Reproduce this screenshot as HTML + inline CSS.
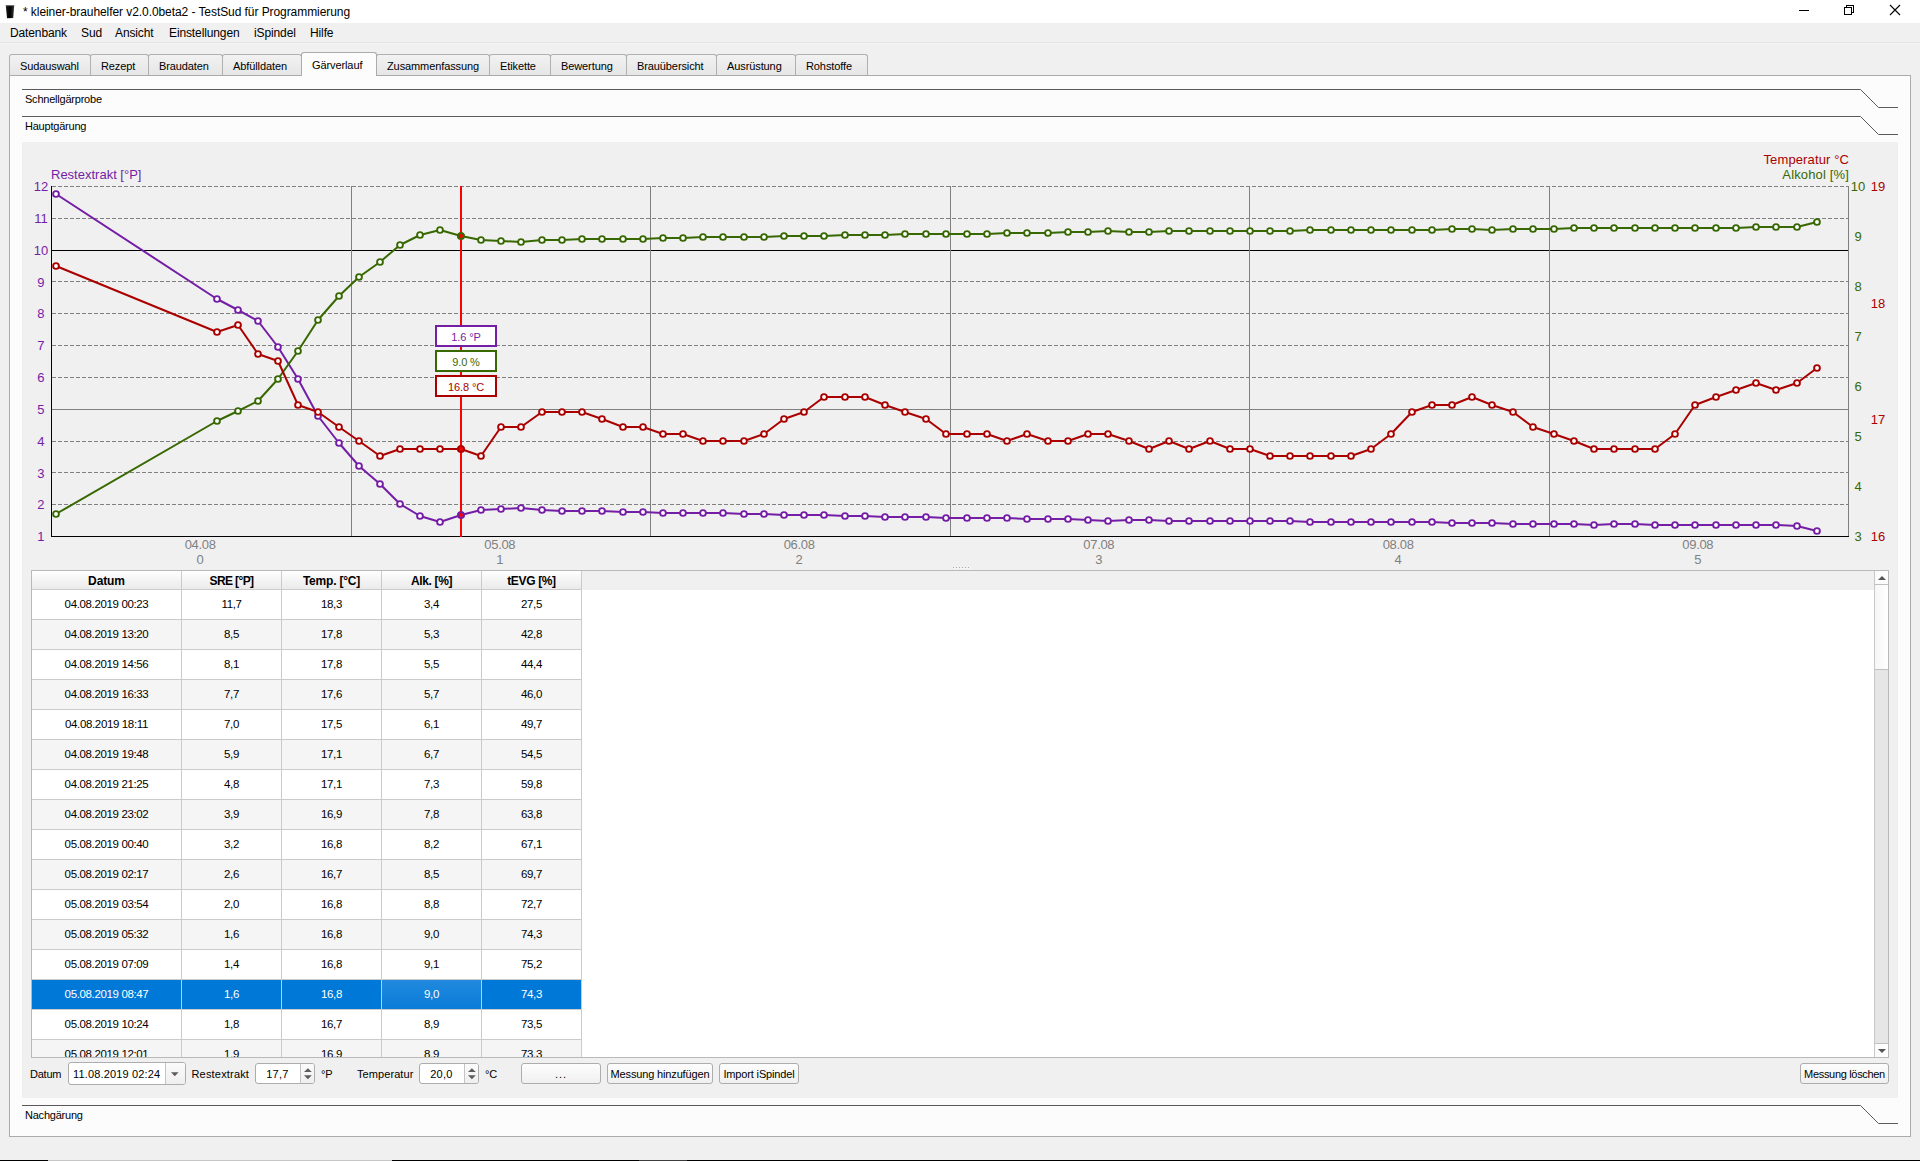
<!DOCTYPE html>
<html lang="de"><head><meta charset="utf-8"><title>kleiner-brauhelfer</title>
<style>
*{box-sizing:border-box;margin:0;padding:0}
html,body{width:1920px;height:1161px;overflow:hidden;background:#f0f0f0;font-family:"Liberation Sans",sans-serif;color:#000}
.abs{position:absolute}
#title{position:absolute;left:0;top:0;width:1920px;height:23px;background:#fff}
#title .txt{position:absolute;left:23px;top:5px;font-size:12px;line-height:15px;letter-spacing:-0.07px;white-space:nowrap}
#menu{position:absolute;left:0;top:23px;width:1920px;height:20px;background:#f0f0f0;border-bottom:1px solid #e2e2e2;font-size:12px;line-height:21px;white-space:nowrap}
#menu span{position:absolute;top:0;letter-spacing:-0.12px}
#menuline{position:absolute;left:0;top:43px;width:1920px;height:1px;background:#f6f6f6}
.tab{position:absolute;top:54px;height:22px;border:1px solid #b0b0b0;border-bottom:none;border-radius:3px 3px 0 0;background:linear-gradient(#f2f2f2,#e5e5e5);font-size:11px;line-height:22px;text-align:left;padding-left:10px;letter-spacing:-0.1px;white-space:nowrap}
.seltab{top:52px;height:24px;background:#fcfcfc;line-height:24px;z-index:3;border-color:#ababab}
#pane{position:absolute;left:9px;top:75px;width:1902px;height:1062px;border:1px solid #ababab;background:#fcfcfc;z-index:1}
#panel{position:absolute;left:22px;top:142px;width:1876px;height:956px;background:#f0f0f0;z-index:2}
.tbx{position:absolute;left:25px;font-size:11px;line-height:14px;letter-spacing:-0.22px;z-index:2}
svg.lines{position:absolute;left:0;top:0;z-index:2}
svg.chart{position:absolute;left:0;top:0;z-index:4}
.tbl{position:absolute;left:31px;top:570px;width:1858px;height:488px;border:1px solid #b9b9b9;background:#fff;overflow:hidden;z-index:4;font-size:11.5px;letter-spacing:-0.36px}
.thead{position:absolute;left:0;top:0;width:1843px;height:19px;background:#f0f0f0}
.th{position:absolute;top:0;height:19px;width:100px;font-weight:bold;font-size:12px;letter-spacing:-0.1px;text-align:center;line-height:20px;border-right:1px solid #cbcbcb;border-bottom:1px solid #cbcbcb;background:linear-gradient(#ffffff,#f2f2f2 60%,#ebebeb)}
.th.c0{width:150px}
.th:nth-child(1){left:0}.th:nth-child(2){left:150px}.th:nth-child(3){left:250px}.th:nth-child(4){left:350px}.th:nth-child(5){left:450px}
.tr{position:relative;height:30px;width:550px;background:#fff}
.tr:nth-child(2){margin-top:19px}
.tr.alt{background:#f5f5f5}
.td{position:absolute;top:0;height:30px;width:100px;text-align:center;line-height:29px;border-right:1px solid #cbcbcb;border-bottom:1px solid #cbcbcb}
.td.c0{width:150px;left:0}
.td:nth-child(2){left:150px}.td:nth-child(3){left:250px}.td:nth-child(4){left:350px}.td:nth-child(5){left:450px}
.tr.sel{background:#0078d7;color:#fff}
.tr.sel .cur{background:linear-gradient(#2189de,#0a7cd8)}
.sb{position:absolute;right:0;top:0;width:14px;height:486px;background:#e6e6e6;border-left:1px solid #c8c8c8}
.sbup,.sbdn{position:absolute;left:0;width:13px;height:14px;background:linear-gradient(90deg,#fafafa,#fff);}
.sbup{top:0;border-bottom:1px solid #c0c0c0}.sbdn{bottom:0;border-top:1px solid #c0c0c0}
.sbup i{position:absolute;left:2.5px;top:4.5px;border:4px solid transparent;border-top:none;border-bottom:4px solid #555;width:0;height:0}
.sbdn i{position:absolute;left:2.5px;top:4.5px;border:4px solid transparent;border-bottom:none;border-top:4px solid #555;width:0;height:0}
.sbh{position:absolute;left:0;top:14px;width:13px;height:85px;background:linear-gradient(90deg,#f6f6f6,#fff);border-bottom:1px solid #c0c0c0}
.lbl{position:absolute;font-size:11px;line-height:14px;letter-spacing:-0.22px;z-index:4;white-space:nowrap}
.btn{position:absolute;top:1063px;height:21px;border:1px solid #adadad;border-radius:3px;background:linear-gradient(#fdfdfd,#f0f0f0);font-size:11px;line-height:21px;text-align:center;letter-spacing:-0.15px;z-index:4;white-space:nowrap}
.edit{position:absolute;top:1063px;height:22px;border:1px solid #adadad;border-radius:3px;background:#fff;font-size:11px;line-height:19px;z-index:4;letter-spacing:-0.1px;white-space:nowrap}
.edit .v{position:absolute;top:0}
.edit .dv{position:absolute;top:0;bottom:0;width:1px;background:#c4c4c4}
.edit .dd{position:absolute;top:0;bottom:0;background:linear-gradient(#fbfbfb,#efefef);border-radius:0 2px 2px 0}
#dots i{position:absolute;top:567px;width:1px;height:1px;background:#a8a8a8;box-shadow:1px 1px 0 #fff;z-index:4}
#bottom{position:absolute;left:0;top:1160px;width:1920px;height:1px;background:#000;z-index:9}
#bottom i{position:absolute;top:0;height:1px;background:#c6c6c6}
</style></head><body>
<div id="title">
<svg class="abs" style="left:5px;top:4px" width="10" height="15" viewBox="0 0 10 15"><defs><linearGradient id="gl" x1="0" x2="1"><stop offset="0" stop-color="#1a1a1a"/><stop offset="0.5" stop-color="#000"/><stop offset="1" stop-color="#333"/></linearGradient></defs><path d="M0.8 1.3 L9.2 0.9 L8.2 14 L2.0 14.2 Z" fill="url(#gl)"/><path d="M0.8 1.3 L9.2 0.9 L9.1 1.9 L0.9 2.3 Z" fill="#777"/></svg>
<div class="txt">* kleiner-brauhelfer v2.0.0beta2 - TestSud für Programmierung</div>
<svg class="abs" style="left:1790px;top:0" width="130" height="23" viewBox="0 0 130 23" fill="none" stroke="#000" stroke-width="1" shape-rendering="crispEdges"><path d="M9 10.5 H19"/><path d="M54.5 7.5 H61.5 V14.5 H54.5 Z"/><path d="M56.5 7.5 V5.5 H63.5 V12.5 H61.5"/><path d="M100 5 L110 15 M110 5 L100 15" shape-rendering="geometricPrecision" stroke-width="1.1"/></svg>
</div>
<div id="menu"><span style="left:10px">Datenbank</span><span style="left:81px">Sud</span><span style="left:115px">Ansicht</span><span style="left:169px">Einstellungen</span><span style="left:254px">iSpindel</span><span style="left:310px">Hilfe</span></div>
<div id="menuline"></div>
<div class="tab" style="left:9px;width:82px">Sudauswahl</div>
<div class="tab" style="left:90px;width:59px">Rezept</div>
<div class="tab" style="left:148px;width:75px">Braudaten</div>
<div class="tab" style="left:222px;width:80px">Abfülldaten</div>
<div class="tab seltab" style="left:301px;width:76px">Gärverlauf</div>
<div class="tab" style="left:376px;width:114px">Zusammenfassung</div>
<div class="tab" style="left:489px;width:62px">Etikette</div>
<div class="tab" style="left:550px;width:77px">Bewertung</div>
<div class="tab" style="left:626px;width:91px">Brauübersicht</div>
<div class="tab" style="left:716px;width:80px">Ausrüstung</div>
<div class="tab" style="left:795px;width:73px">Rohstoffe</div>

<div id="pane"></div>
<div id="panel"></div>
<svg class="lines" width="1920" height="1161" viewBox="0 0 1920 1161" fill="none" stroke="#5a5a5a" stroke-width="1">
<path d="M22 89.5 H1860.5 L1878.5 107.5 H1898"/>
<path d="M22 116.5 H1860.5 L1878.5 134.5 H1898"/>
<path d="M22 1105.5 H1860.5 L1878.5 1123.5 H1898"/>
</svg>
<div class="tbx" style="top:92px">Schnellgärprobe</div>
<div class="tbx" style="top:119px">Hauptgärung</div>
<div class="tbx" style="top:1108px">Nachgärung</div>
<svg class="chart" width="1920" height="600" viewBox="0 0 1920 600" font-family="Liberation Sans, sans-serif">
<g shape-rendering="crispEdges" fill="none">
<line x1="52" y1="504.5" x2="1848.5" y2="504.5" stroke="#808080" stroke-dasharray="4 2"/>
<line x1="52" y1="472.5" x2="1848.5" y2="472.5" stroke="#808080" stroke-dasharray="4 2"/>
<line x1="52" y1="441.5" x2="1848.5" y2="441.5" stroke="#808080" stroke-dasharray="4 2"/>
<line x1="51.5" y1="409.5" x2="1848.5" y2="409.5" stroke="#7f7f7f"/>
<line x1="52" y1="377.5" x2="1848.5" y2="377.5" stroke="#808080" stroke-dasharray="4 2"/>
<line x1="52" y1="345.5" x2="1848.5" y2="345.5" stroke="#808080" stroke-dasharray="4 2"/>
<line x1="52" y1="313.5" x2="1848.5" y2="313.5" stroke="#808080" stroke-dasharray="4 2"/>
<line x1="52" y1="281.5" x2="1848.5" y2="281.5" stroke="#808080" stroke-dasharray="4 2"/>
<line x1="51.5" y1="250.5" x2="1848.5" y2="250.5" stroke="#000"/>
<line x1="52" y1="218.5" x2="1848.5" y2="218.5" stroke="#808080" stroke-dasharray="4 2"/>
<line x1="52" y1="186.5" x2="1848.5" y2="186.5" stroke="#808080" stroke-dasharray="4 2"/>
<line x1="351.5" y1="186.0" x2="351.5" y2="537.0" stroke="#7f7f7f"/>
<line x1="650.5" y1="186.0" x2="650.5" y2="537.0" stroke="#7f7f7f"/>
<line x1="950.5" y1="186.0" x2="950.5" y2="537.0" stroke="#7f7f7f"/>
<line x1="1249.5" y1="186.0" x2="1249.5" y2="537.0" stroke="#7f7f7f"/>
<line x1="1549.5" y1="186.0" x2="1549.5" y2="537.0" stroke="#7f7f7f"/>
<line x1="1848.5" y1="186.0" x2="1848.5" y2="537.0" stroke="#7f7f7f"/>
<line x1="51.5" y1="186.0" x2="51.5" y2="537.0" stroke="#000"/>
<line x1="51.0" y1="536.5" x2="1849.0" y2="536.5" stroke="#000"/>
</g>
<text x="40.9" y="541.1" text-anchor="middle" fill="#741ea6" font-size="13">1</text>
<text x="40.9" y="509.3" text-anchor="middle" fill="#741ea6" font-size="13">2</text>
<text x="40.9" y="477.5" text-anchor="middle" fill="#741ea6" font-size="13">3</text>
<text x="40.9" y="445.6" text-anchor="middle" fill="#741ea6" font-size="13">4</text>
<text x="40.9" y="413.8" text-anchor="middle" fill="#741ea6" font-size="13">5</text>
<text x="40.9" y="382.0" text-anchor="middle" fill="#741ea6" font-size="13">6</text>
<text x="40.9" y="350.2" text-anchor="middle" fill="#741ea6" font-size="13">7</text>
<text x="40.9" y="318.4" text-anchor="middle" fill="#741ea6" font-size="13">8</text>
<text x="40.9" y="286.6" text-anchor="middle" fill="#741ea6" font-size="13">9</text>
<text x="40.9" y="254.7" text-anchor="middle" fill="#741ea6" font-size="13">10</text>
<text x="40.9" y="222.9" text-anchor="middle" fill="#741ea6" font-size="13">11</text>
<text x="40.9" y="191.1" text-anchor="middle" fill="#741ea6" font-size="13">12</text>
<text x="1858" y="541.1" text-anchor="middle" fill="#386802" font-size="13">3</text>
<text x="1858" y="491.1" text-anchor="middle" fill="#386802" font-size="13">4</text>
<text x="1858" y="441.1" text-anchor="middle" fill="#386802" font-size="13">5</text>
<text x="1858" y="391.1" text-anchor="middle" fill="#386802" font-size="13">6</text>
<text x="1858" y="341.1" text-anchor="middle" fill="#386802" font-size="13">7</text>
<text x="1858" y="291.1" text-anchor="middle" fill="#386802" font-size="13">8</text>
<text x="1858" y="241.1" text-anchor="middle" fill="#386802" font-size="13">9</text>
<text x="1858" y="191.1" text-anchor="middle" fill="#386802" font-size="13">10</text>
<text x="1878" y="541.1" text-anchor="middle" fill="#aa0000" font-size="13">16</text>
<text x="1878" y="424.4" text-anchor="middle" fill="#aa0000" font-size="13">17</text>
<text x="1878" y="307.8" text-anchor="middle" fill="#aa0000" font-size="13">18</text>
<text x="1878" y="191.1" text-anchor="middle" fill="#aa0000" font-size="13">19</text>
<text x="51" y="178.5" fill="#741ea6" font-size="13">Restextrakt [°P]</text>
<text x="1849" y="164" text-anchor="end" fill="#aa0000" font-size="13" letter-spacing="0.12">Temperatur °C</text>
<text x="1849" y="179" text-anchor="end" fill="#386802" font-size="13" letter-spacing="0.15">Alkohol [%]</text>
<text x="200.2" y="548.7" text-anchor="middle" fill="#808080" font-size="13" letter-spacing="-0.3">04.08</text>
<text x="200.2" y="563.5" text-anchor="middle" fill="#808080" font-size="13">0</text>
<text x="499.8" y="548.7" text-anchor="middle" fill="#808080" font-size="13" letter-spacing="-0.3">05.08</text>
<text x="499.8" y="563.5" text-anchor="middle" fill="#808080" font-size="13">1</text>
<text x="799.2" y="548.7" text-anchor="middle" fill="#808080" font-size="13" letter-spacing="-0.3">06.08</text>
<text x="799.2" y="563.5" text-anchor="middle" fill="#808080" font-size="13">2</text>
<text x="1098.8" y="548.7" text-anchor="middle" fill="#808080" font-size="13" letter-spacing="-0.3">07.08</text>
<text x="1098.8" y="563.5" text-anchor="middle" fill="#808080" font-size="13">3</text>
<text x="1398.2" y="548.7" text-anchor="middle" fill="#808080" font-size="13" letter-spacing="-0.3">08.08</text>
<text x="1398.2" y="563.5" text-anchor="middle" fill="#808080" font-size="13">4</text>
<text x="1697.8" y="548.7" text-anchor="middle" fill="#808080" font-size="13" letter-spacing="-0.3">09.08</text>
<text x="1697.8" y="563.5" text-anchor="middle" fill="#808080" font-size="13">5</text>
<polyline points="56.0,194.0 217.0,299.0 238.0,310.0 258.0,321.0 278.0,347.0 298.0,379.0 318.0,416.0 339.0,443.0 359.0,466.0 380.0,484.0 400.0,504.0 420.0,516.0 440.0,522.0 461.0,515.0 481.0,510.0 501.0,509.0 521.0,508.0 542.0,510.0 562.0,511.0 582.0,511.0 602.0,511.0 623.0,512.0 643.0,512.0 663.0,513.0 683.0,513.0 703.0,513.0 723.0,513.0 744.0,514.0 764.0,514.0 784.0,515.0 804.0,515.0 824.0,515.0 845.0,516.0 865.0,516.0 885.0,517.0 905.0,517.0 926.0,517.0 946.0,518.0 967.0,518.0 987.0,518.0 1007.0,518.0 1027.0,519.0 1048.0,519.0 1068.0,519.0 1088.0,520.0 1108.0,521.0 1129.0,520.0 1149.0,520.0 1169.0,521.0 1189.0,521.0 1210.0,521.0 1230.0,521.0 1250.0,521.0 1270.0,521.0 1290.0,521.0 1310.0,522.0 1331.0,522.0 1351.0,522.0 1371.0,522.0 1391.0,522.0 1412.0,522.0 1432.0,522.0 1452.0,523.0 1472.0,523.0 1492.0,523.0 1513.0,524.0 1533.0,524.0 1554.0,524.0 1574.0,524.0 1594.0,525.0 1614.0,524.0 1635.0,524.0 1655.0,525.0 1675.0,525.0 1695.0,525.0 1716.0,525.0 1736.0,525.0 1756.0,525.0 1776.0,525.0 1797.0,526.0 1817.0,531.0" fill="none" stroke="#741ea6" stroke-width="2" stroke-linejoin="round"/>
<circle cx="56.0" cy="194.0" r="2.9" fill="#ffffff" stroke="#741ea6" stroke-width="1.9"/><circle cx="217.0" cy="299.0" r="2.9" fill="#ffffff" stroke="#741ea6" stroke-width="1.9"/><circle cx="238.0" cy="310.0" r="2.9" fill="#ffffff" stroke="#741ea6" stroke-width="1.9"/><circle cx="258.0" cy="321.0" r="2.9" fill="#ffffff" stroke="#741ea6" stroke-width="1.9"/><circle cx="278.0" cy="347.0" r="2.9" fill="#ffffff" stroke="#741ea6" stroke-width="1.9"/><circle cx="298.0" cy="379.0" r="2.9" fill="#ffffff" stroke="#741ea6" stroke-width="1.9"/><circle cx="318.0" cy="416.0" r="2.9" fill="#ffffff" stroke="#741ea6" stroke-width="1.9"/><circle cx="339.0" cy="443.0" r="2.9" fill="#ffffff" stroke="#741ea6" stroke-width="1.9"/><circle cx="359.0" cy="466.0" r="2.9" fill="#ffffff" stroke="#741ea6" stroke-width="1.9"/><circle cx="380.0" cy="484.0" r="2.9" fill="#ffffff" stroke="#741ea6" stroke-width="1.9"/><circle cx="400.0" cy="504.0" r="2.9" fill="#ffffff" stroke="#741ea6" stroke-width="1.9"/><circle cx="420.0" cy="516.0" r="2.9" fill="#ffffff" stroke="#741ea6" stroke-width="1.9"/><circle cx="440.0" cy="522.0" r="2.9" fill="#ffffff" stroke="#741ea6" stroke-width="1.9"/><circle cx="461.0" cy="515.0" r="2.9" fill="#ff0000" stroke="#741ea6" stroke-width="1.9"/><circle cx="481.0" cy="510.0" r="2.9" fill="#ffffff" stroke="#741ea6" stroke-width="1.9"/><circle cx="501.0" cy="509.0" r="2.9" fill="#ffffff" stroke="#741ea6" stroke-width="1.9"/><circle cx="521.0" cy="508.0" r="2.9" fill="#ffffff" stroke="#741ea6" stroke-width="1.9"/><circle cx="542.0" cy="510.0" r="2.9" fill="#ffffff" stroke="#741ea6" stroke-width="1.9"/><circle cx="562.0" cy="511.0" r="2.9" fill="#ffffff" stroke="#741ea6" stroke-width="1.9"/><circle cx="582.0" cy="511.0" r="2.9" fill="#ffffff" stroke="#741ea6" stroke-width="1.9"/><circle cx="602.0" cy="511.0" r="2.9" fill="#ffffff" stroke="#741ea6" stroke-width="1.9"/><circle cx="623.0" cy="512.0" r="2.9" fill="#ffffff" stroke="#741ea6" stroke-width="1.9"/><circle cx="643.0" cy="512.0" r="2.9" fill="#ffffff" stroke="#741ea6" stroke-width="1.9"/><circle cx="663.0" cy="513.0" r="2.9" fill="#ffffff" stroke="#741ea6" stroke-width="1.9"/><circle cx="683.0" cy="513.0" r="2.9" fill="#ffffff" stroke="#741ea6" stroke-width="1.9"/><circle cx="703.0" cy="513.0" r="2.9" fill="#ffffff" stroke="#741ea6" stroke-width="1.9"/><circle cx="723.0" cy="513.0" r="2.9" fill="#ffffff" stroke="#741ea6" stroke-width="1.9"/><circle cx="744.0" cy="514.0" r="2.9" fill="#ffffff" stroke="#741ea6" stroke-width="1.9"/><circle cx="764.0" cy="514.0" r="2.9" fill="#ffffff" stroke="#741ea6" stroke-width="1.9"/><circle cx="784.0" cy="515.0" r="2.9" fill="#ffffff" stroke="#741ea6" stroke-width="1.9"/><circle cx="804.0" cy="515.0" r="2.9" fill="#ffffff" stroke="#741ea6" stroke-width="1.9"/><circle cx="824.0" cy="515.0" r="2.9" fill="#ffffff" stroke="#741ea6" stroke-width="1.9"/><circle cx="845.0" cy="516.0" r="2.9" fill="#ffffff" stroke="#741ea6" stroke-width="1.9"/><circle cx="865.0" cy="516.0" r="2.9" fill="#ffffff" stroke="#741ea6" stroke-width="1.9"/><circle cx="885.0" cy="517.0" r="2.9" fill="#ffffff" stroke="#741ea6" stroke-width="1.9"/><circle cx="905.0" cy="517.0" r="2.9" fill="#ffffff" stroke="#741ea6" stroke-width="1.9"/><circle cx="926.0" cy="517.0" r="2.9" fill="#ffffff" stroke="#741ea6" stroke-width="1.9"/><circle cx="946.0" cy="518.0" r="2.9" fill="#ffffff" stroke="#741ea6" stroke-width="1.9"/><circle cx="967.0" cy="518.0" r="2.9" fill="#ffffff" stroke="#741ea6" stroke-width="1.9"/><circle cx="987.0" cy="518.0" r="2.9" fill="#ffffff" stroke="#741ea6" stroke-width="1.9"/><circle cx="1007.0" cy="518.0" r="2.9" fill="#ffffff" stroke="#741ea6" stroke-width="1.9"/><circle cx="1027.0" cy="519.0" r="2.9" fill="#ffffff" stroke="#741ea6" stroke-width="1.9"/><circle cx="1048.0" cy="519.0" r="2.9" fill="#ffffff" stroke="#741ea6" stroke-width="1.9"/><circle cx="1068.0" cy="519.0" r="2.9" fill="#ffffff" stroke="#741ea6" stroke-width="1.9"/><circle cx="1088.0" cy="520.0" r="2.9" fill="#ffffff" stroke="#741ea6" stroke-width="1.9"/><circle cx="1108.0" cy="521.0" r="2.9" fill="#ffffff" stroke="#741ea6" stroke-width="1.9"/><circle cx="1129.0" cy="520.0" r="2.9" fill="#ffffff" stroke="#741ea6" stroke-width="1.9"/><circle cx="1149.0" cy="520.0" r="2.9" fill="#ffffff" stroke="#741ea6" stroke-width="1.9"/><circle cx="1169.0" cy="521.0" r="2.9" fill="#ffffff" stroke="#741ea6" stroke-width="1.9"/><circle cx="1189.0" cy="521.0" r="2.9" fill="#ffffff" stroke="#741ea6" stroke-width="1.9"/><circle cx="1210.0" cy="521.0" r="2.9" fill="#ffffff" stroke="#741ea6" stroke-width="1.9"/><circle cx="1230.0" cy="521.0" r="2.9" fill="#ffffff" stroke="#741ea6" stroke-width="1.9"/><circle cx="1250.0" cy="521.0" r="2.9" fill="#ffffff" stroke="#741ea6" stroke-width="1.9"/><circle cx="1270.0" cy="521.0" r="2.9" fill="#ffffff" stroke="#741ea6" stroke-width="1.9"/><circle cx="1290.0" cy="521.0" r="2.9" fill="#ffffff" stroke="#741ea6" stroke-width="1.9"/><circle cx="1310.0" cy="522.0" r="2.9" fill="#ffffff" stroke="#741ea6" stroke-width="1.9"/><circle cx="1331.0" cy="522.0" r="2.9" fill="#ffffff" stroke="#741ea6" stroke-width="1.9"/><circle cx="1351.0" cy="522.0" r="2.9" fill="#ffffff" stroke="#741ea6" stroke-width="1.9"/><circle cx="1371.0" cy="522.0" r="2.9" fill="#ffffff" stroke="#741ea6" stroke-width="1.9"/><circle cx="1391.0" cy="522.0" r="2.9" fill="#ffffff" stroke="#741ea6" stroke-width="1.9"/><circle cx="1412.0" cy="522.0" r="2.9" fill="#ffffff" stroke="#741ea6" stroke-width="1.9"/><circle cx="1432.0" cy="522.0" r="2.9" fill="#ffffff" stroke="#741ea6" stroke-width="1.9"/><circle cx="1452.0" cy="523.0" r="2.9" fill="#ffffff" stroke="#741ea6" stroke-width="1.9"/><circle cx="1472.0" cy="523.0" r="2.9" fill="#ffffff" stroke="#741ea6" stroke-width="1.9"/><circle cx="1492.0" cy="523.0" r="2.9" fill="#ffffff" stroke="#741ea6" stroke-width="1.9"/><circle cx="1513.0" cy="524.0" r="2.9" fill="#ffffff" stroke="#741ea6" stroke-width="1.9"/><circle cx="1533.0" cy="524.0" r="2.9" fill="#ffffff" stroke="#741ea6" stroke-width="1.9"/><circle cx="1554.0" cy="524.0" r="2.9" fill="#ffffff" stroke="#741ea6" stroke-width="1.9"/><circle cx="1574.0" cy="524.0" r="2.9" fill="#ffffff" stroke="#741ea6" stroke-width="1.9"/><circle cx="1594.0" cy="525.0" r="2.9" fill="#ffffff" stroke="#741ea6" stroke-width="1.9"/><circle cx="1614.0" cy="524.0" r="2.9" fill="#ffffff" stroke="#741ea6" stroke-width="1.9"/><circle cx="1635.0" cy="524.0" r="2.9" fill="#ffffff" stroke="#741ea6" stroke-width="1.9"/><circle cx="1655.0" cy="525.0" r="2.9" fill="#ffffff" stroke="#741ea6" stroke-width="1.9"/><circle cx="1675.0" cy="525.0" r="2.9" fill="#ffffff" stroke="#741ea6" stroke-width="1.9"/><circle cx="1695.0" cy="525.0" r="2.9" fill="#ffffff" stroke="#741ea6" stroke-width="1.9"/><circle cx="1716.0" cy="525.0" r="2.9" fill="#ffffff" stroke="#741ea6" stroke-width="1.9"/><circle cx="1736.0" cy="525.0" r="2.9" fill="#ffffff" stroke="#741ea6" stroke-width="1.9"/><circle cx="1756.0" cy="525.0" r="2.9" fill="#ffffff" stroke="#741ea6" stroke-width="1.9"/><circle cx="1776.0" cy="525.0" r="2.9" fill="#ffffff" stroke="#741ea6" stroke-width="1.9"/><circle cx="1797.0" cy="526.0" r="2.9" fill="#ffffff" stroke="#741ea6" stroke-width="1.9"/><circle cx="1817.0" cy="531.0" r="2.9" fill="#ffffff" stroke="#741ea6" stroke-width="1.9"/>

<polyline points="56.0,514.0 217.0,421.0 238.0,411.0 258.0,401.0 278.0,379.0 298.0,351.0 318.0,320.0 339.0,296.0 359.0,277.0 380.0,262.0 400.0,245.0 420.0,235.0 440.0,230.0 461.0,236.0 481.0,240.0 501.0,241.0 521.0,242.0 542.0,240.0 562.0,240.0 582.0,239.0 602.0,239.0 623.0,239.0 643.0,239.0 663.0,238.0 683.0,238.0 703.0,237.0 723.0,237.0 744.0,237.0 764.0,237.0 784.0,236.0 804.0,236.0 824.0,236.0 845.0,235.0 865.0,235.0 885.0,235.0 905.0,234.0 926.0,234.0 946.0,234.0 967.0,234.0 987.0,234.0 1007.0,233.0 1027.0,233.0 1048.0,233.0 1068.0,232.0 1088.0,232.0 1108.0,231.0 1129.0,232.0 1149.0,232.0 1169.0,231.0 1189.0,231.0 1210.0,231.0 1230.0,231.0 1250.0,231.0 1270.0,231.0 1290.0,231.0 1310.0,230.0 1331.0,230.0 1351.0,230.0 1371.0,230.0 1391.0,230.0 1412.0,230.0 1432.0,230.0 1452.0,229.0 1472.0,229.0 1492.0,230.0 1513.0,229.0 1533.0,229.0 1554.0,229.0 1574.0,228.0 1594.0,228.0 1614.0,228.0 1635.0,228.0 1655.0,228.0 1675.0,228.0 1695.0,228.0 1716.0,228.0 1736.0,228.0 1756.0,227.0 1776.0,227.0 1797.0,227.0 1817.0,222.0" fill="none" stroke="#386802" stroke-width="2" stroke-linejoin="round"/>
<circle cx="56.0" cy="514.0" r="2.9" fill="#ffffff" stroke="#386802" stroke-width="1.9"/><circle cx="217.0" cy="421.0" r="2.9" fill="#ffffff" stroke="#386802" stroke-width="1.9"/><circle cx="238.0" cy="411.0" r="2.9" fill="#ffffff" stroke="#386802" stroke-width="1.9"/><circle cx="258.0" cy="401.0" r="2.9" fill="#ffffff" stroke="#386802" stroke-width="1.9"/><circle cx="278.0" cy="379.0" r="2.9" fill="#ffffff" stroke="#386802" stroke-width="1.9"/><circle cx="298.0" cy="351.0" r="2.9" fill="#ffffff" stroke="#386802" stroke-width="1.9"/><circle cx="318.0" cy="320.0" r="2.9" fill="#ffffff" stroke="#386802" stroke-width="1.9"/><circle cx="339.0" cy="296.0" r="2.9" fill="#ffffff" stroke="#386802" stroke-width="1.9"/><circle cx="359.0" cy="277.0" r="2.9" fill="#ffffff" stroke="#386802" stroke-width="1.9"/><circle cx="380.0" cy="262.0" r="2.9" fill="#ffffff" stroke="#386802" stroke-width="1.9"/><circle cx="400.0" cy="245.0" r="2.9" fill="#ffffff" stroke="#386802" stroke-width="1.9"/><circle cx="420.0" cy="235.0" r="2.9" fill="#ffffff" stroke="#386802" stroke-width="1.9"/><circle cx="440.0" cy="230.0" r="2.9" fill="#ffffff" stroke="#386802" stroke-width="1.9"/><circle cx="461.0" cy="236.0" r="2.9" fill="#ff0000" stroke="#386802" stroke-width="1.9"/><circle cx="481.0" cy="240.0" r="2.9" fill="#ffffff" stroke="#386802" stroke-width="1.9"/><circle cx="501.0" cy="241.0" r="2.9" fill="#ffffff" stroke="#386802" stroke-width="1.9"/><circle cx="521.0" cy="242.0" r="2.9" fill="#ffffff" stroke="#386802" stroke-width="1.9"/><circle cx="542.0" cy="240.0" r="2.9" fill="#ffffff" stroke="#386802" stroke-width="1.9"/><circle cx="562.0" cy="240.0" r="2.9" fill="#ffffff" stroke="#386802" stroke-width="1.9"/><circle cx="582.0" cy="239.0" r="2.9" fill="#ffffff" stroke="#386802" stroke-width="1.9"/><circle cx="602.0" cy="239.0" r="2.9" fill="#ffffff" stroke="#386802" stroke-width="1.9"/><circle cx="623.0" cy="239.0" r="2.9" fill="#ffffff" stroke="#386802" stroke-width="1.9"/><circle cx="643.0" cy="239.0" r="2.9" fill="#ffffff" stroke="#386802" stroke-width="1.9"/><circle cx="663.0" cy="238.0" r="2.9" fill="#ffffff" stroke="#386802" stroke-width="1.9"/><circle cx="683.0" cy="238.0" r="2.9" fill="#ffffff" stroke="#386802" stroke-width="1.9"/><circle cx="703.0" cy="237.0" r="2.9" fill="#ffffff" stroke="#386802" stroke-width="1.9"/><circle cx="723.0" cy="237.0" r="2.9" fill="#ffffff" stroke="#386802" stroke-width="1.9"/><circle cx="744.0" cy="237.0" r="2.9" fill="#ffffff" stroke="#386802" stroke-width="1.9"/><circle cx="764.0" cy="237.0" r="2.9" fill="#ffffff" stroke="#386802" stroke-width="1.9"/><circle cx="784.0" cy="236.0" r="2.9" fill="#ffffff" stroke="#386802" stroke-width="1.9"/><circle cx="804.0" cy="236.0" r="2.9" fill="#ffffff" stroke="#386802" stroke-width="1.9"/><circle cx="824.0" cy="236.0" r="2.9" fill="#ffffff" stroke="#386802" stroke-width="1.9"/><circle cx="845.0" cy="235.0" r="2.9" fill="#ffffff" stroke="#386802" stroke-width="1.9"/><circle cx="865.0" cy="235.0" r="2.9" fill="#ffffff" stroke="#386802" stroke-width="1.9"/><circle cx="885.0" cy="235.0" r="2.9" fill="#ffffff" stroke="#386802" stroke-width="1.9"/><circle cx="905.0" cy="234.0" r="2.9" fill="#ffffff" stroke="#386802" stroke-width="1.9"/><circle cx="926.0" cy="234.0" r="2.9" fill="#ffffff" stroke="#386802" stroke-width="1.9"/><circle cx="946.0" cy="234.0" r="2.9" fill="#ffffff" stroke="#386802" stroke-width="1.9"/><circle cx="967.0" cy="234.0" r="2.9" fill="#ffffff" stroke="#386802" stroke-width="1.9"/><circle cx="987.0" cy="234.0" r="2.9" fill="#ffffff" stroke="#386802" stroke-width="1.9"/><circle cx="1007.0" cy="233.0" r="2.9" fill="#ffffff" stroke="#386802" stroke-width="1.9"/><circle cx="1027.0" cy="233.0" r="2.9" fill="#ffffff" stroke="#386802" stroke-width="1.9"/><circle cx="1048.0" cy="233.0" r="2.9" fill="#ffffff" stroke="#386802" stroke-width="1.9"/><circle cx="1068.0" cy="232.0" r="2.9" fill="#ffffff" stroke="#386802" stroke-width="1.9"/><circle cx="1088.0" cy="232.0" r="2.9" fill="#ffffff" stroke="#386802" stroke-width="1.9"/><circle cx="1108.0" cy="231.0" r="2.9" fill="#ffffff" stroke="#386802" stroke-width="1.9"/><circle cx="1129.0" cy="232.0" r="2.9" fill="#ffffff" stroke="#386802" stroke-width="1.9"/><circle cx="1149.0" cy="232.0" r="2.9" fill="#ffffff" stroke="#386802" stroke-width="1.9"/><circle cx="1169.0" cy="231.0" r="2.9" fill="#ffffff" stroke="#386802" stroke-width="1.9"/><circle cx="1189.0" cy="231.0" r="2.9" fill="#ffffff" stroke="#386802" stroke-width="1.9"/><circle cx="1210.0" cy="231.0" r="2.9" fill="#ffffff" stroke="#386802" stroke-width="1.9"/><circle cx="1230.0" cy="231.0" r="2.9" fill="#ffffff" stroke="#386802" stroke-width="1.9"/><circle cx="1250.0" cy="231.0" r="2.9" fill="#ffffff" stroke="#386802" stroke-width="1.9"/><circle cx="1270.0" cy="231.0" r="2.9" fill="#ffffff" stroke="#386802" stroke-width="1.9"/><circle cx="1290.0" cy="231.0" r="2.9" fill="#ffffff" stroke="#386802" stroke-width="1.9"/><circle cx="1310.0" cy="230.0" r="2.9" fill="#ffffff" stroke="#386802" stroke-width="1.9"/><circle cx="1331.0" cy="230.0" r="2.9" fill="#ffffff" stroke="#386802" stroke-width="1.9"/><circle cx="1351.0" cy="230.0" r="2.9" fill="#ffffff" stroke="#386802" stroke-width="1.9"/><circle cx="1371.0" cy="230.0" r="2.9" fill="#ffffff" stroke="#386802" stroke-width="1.9"/><circle cx="1391.0" cy="230.0" r="2.9" fill="#ffffff" stroke="#386802" stroke-width="1.9"/><circle cx="1412.0" cy="230.0" r="2.9" fill="#ffffff" stroke="#386802" stroke-width="1.9"/><circle cx="1432.0" cy="230.0" r="2.9" fill="#ffffff" stroke="#386802" stroke-width="1.9"/><circle cx="1452.0" cy="229.0" r="2.9" fill="#ffffff" stroke="#386802" stroke-width="1.9"/><circle cx="1472.0" cy="229.0" r="2.9" fill="#ffffff" stroke="#386802" stroke-width="1.9"/><circle cx="1492.0" cy="230.0" r="2.9" fill="#ffffff" stroke="#386802" stroke-width="1.9"/><circle cx="1513.0" cy="229.0" r="2.9" fill="#ffffff" stroke="#386802" stroke-width="1.9"/><circle cx="1533.0" cy="229.0" r="2.9" fill="#ffffff" stroke="#386802" stroke-width="1.9"/><circle cx="1554.0" cy="229.0" r="2.9" fill="#ffffff" stroke="#386802" stroke-width="1.9"/><circle cx="1574.0" cy="228.0" r="2.9" fill="#ffffff" stroke="#386802" stroke-width="1.9"/><circle cx="1594.0" cy="228.0" r="2.9" fill="#ffffff" stroke="#386802" stroke-width="1.9"/><circle cx="1614.0" cy="228.0" r="2.9" fill="#ffffff" stroke="#386802" stroke-width="1.9"/><circle cx="1635.0" cy="228.0" r="2.9" fill="#ffffff" stroke="#386802" stroke-width="1.9"/><circle cx="1655.0" cy="228.0" r="2.9" fill="#ffffff" stroke="#386802" stroke-width="1.9"/><circle cx="1675.0" cy="228.0" r="2.9" fill="#ffffff" stroke="#386802" stroke-width="1.9"/><circle cx="1695.0" cy="228.0" r="2.9" fill="#ffffff" stroke="#386802" stroke-width="1.9"/><circle cx="1716.0" cy="228.0" r="2.9" fill="#ffffff" stroke="#386802" stroke-width="1.9"/><circle cx="1736.0" cy="228.0" r="2.9" fill="#ffffff" stroke="#386802" stroke-width="1.9"/><circle cx="1756.0" cy="227.0" r="2.9" fill="#ffffff" stroke="#386802" stroke-width="1.9"/><circle cx="1776.0" cy="227.0" r="2.9" fill="#ffffff" stroke="#386802" stroke-width="1.9"/><circle cx="1797.0" cy="227.0" r="2.9" fill="#ffffff" stroke="#386802" stroke-width="1.9"/><circle cx="1817.0" cy="222.0" r="2.9" fill="#ffffff" stroke="#386802" stroke-width="1.9"/>

<polyline points="56.0,266.0 217.0,332.0 238.0,325.0 258.0,354.0 278.0,361.0 298.0,405.0 318.0,412.0 339.0,427.0 359.0,441.0 380.0,456.0 400.0,449.0 420.0,449.0 440.0,449.0 461.0,449.0 481.0,456.0 501.0,427.0 521.0,427.0 542.0,412.0 562.0,412.0 582.0,412.0 602.0,419.0 623.0,427.0 643.0,427.0 663.0,434.0 683.0,434.0 703.0,441.0 723.0,441.0 744.0,441.0 764.0,434.0 784.0,419.0 804.0,412.0 824.0,397.0 845.0,397.0 865.0,397.0 885.0,405.0 905.0,412.0 926.0,419.0 946.0,434.0 967.0,434.0 987.0,434.0 1007.0,441.0 1027.0,434.0 1048.0,441.0 1068.0,441.0 1088.0,434.0 1108.0,434.0 1129.0,441.0 1149.0,449.0 1169.0,441.0 1189.0,449.0 1210.0,441.0 1230.0,449.0 1250.0,449.0 1270.0,456.0 1290.0,456.0 1310.0,456.0 1331.0,456.0 1351.0,456.0 1371.0,449.0 1391.0,434.0 1412.0,412.0 1432.0,405.0 1452.0,405.0 1472.0,397.0 1492.0,405.0 1513.0,412.0 1533.0,427.0 1554.0,434.0 1574.0,441.0 1594.0,449.0 1614.0,449.0 1635.0,449.0 1655.0,449.0 1675.0,434.0 1695.0,405.0 1716.0,397.0 1736.0,390.0 1756.0,383.0 1776.0,390.0 1797.0,383.0 1817.0,368.0" fill="none" stroke="#aa0000" stroke-width="2" stroke-linejoin="round"/>
<circle cx="56.0" cy="266.0" r="2.9" fill="#ffffff" stroke="#aa0000" stroke-width="1.9"/><circle cx="217.0" cy="332.0" r="2.9" fill="#ffffff" stroke="#aa0000" stroke-width="1.9"/><circle cx="238.0" cy="325.0" r="2.9" fill="#ffffff" stroke="#aa0000" stroke-width="1.9"/><circle cx="258.0" cy="354.0" r="2.9" fill="#ffffff" stroke="#aa0000" stroke-width="1.9"/><circle cx="278.0" cy="361.0" r="2.9" fill="#ffffff" stroke="#aa0000" stroke-width="1.9"/><circle cx="298.0" cy="405.0" r="2.9" fill="#ffffff" stroke="#aa0000" stroke-width="1.9"/><circle cx="318.0" cy="412.0" r="2.9" fill="#ffffff" stroke="#aa0000" stroke-width="1.9"/><circle cx="339.0" cy="427.0" r="2.9" fill="#ffffff" stroke="#aa0000" stroke-width="1.9"/><circle cx="359.0" cy="441.0" r="2.9" fill="#ffffff" stroke="#aa0000" stroke-width="1.9"/><circle cx="380.0" cy="456.0" r="2.9" fill="#ffffff" stroke="#aa0000" stroke-width="1.9"/><circle cx="400.0" cy="449.0" r="2.9" fill="#ffffff" stroke="#aa0000" stroke-width="1.9"/><circle cx="420.0" cy="449.0" r="2.9" fill="#ffffff" stroke="#aa0000" stroke-width="1.9"/><circle cx="440.0" cy="449.0" r="2.9" fill="#ffffff" stroke="#aa0000" stroke-width="1.9"/><circle cx="461.0" cy="449.0" r="2.9" fill="#ff0000" stroke="#aa0000" stroke-width="1.9"/><circle cx="481.0" cy="456.0" r="2.9" fill="#ffffff" stroke="#aa0000" stroke-width="1.9"/><circle cx="501.0" cy="427.0" r="2.9" fill="#ffffff" stroke="#aa0000" stroke-width="1.9"/><circle cx="521.0" cy="427.0" r="2.9" fill="#ffffff" stroke="#aa0000" stroke-width="1.9"/><circle cx="542.0" cy="412.0" r="2.9" fill="#ffffff" stroke="#aa0000" stroke-width="1.9"/><circle cx="562.0" cy="412.0" r="2.9" fill="#ffffff" stroke="#aa0000" stroke-width="1.9"/><circle cx="582.0" cy="412.0" r="2.9" fill="#ffffff" stroke="#aa0000" stroke-width="1.9"/><circle cx="602.0" cy="419.0" r="2.9" fill="#ffffff" stroke="#aa0000" stroke-width="1.9"/><circle cx="623.0" cy="427.0" r="2.9" fill="#ffffff" stroke="#aa0000" stroke-width="1.9"/><circle cx="643.0" cy="427.0" r="2.9" fill="#ffffff" stroke="#aa0000" stroke-width="1.9"/><circle cx="663.0" cy="434.0" r="2.9" fill="#ffffff" stroke="#aa0000" stroke-width="1.9"/><circle cx="683.0" cy="434.0" r="2.9" fill="#ffffff" stroke="#aa0000" stroke-width="1.9"/><circle cx="703.0" cy="441.0" r="2.9" fill="#ffffff" stroke="#aa0000" stroke-width="1.9"/><circle cx="723.0" cy="441.0" r="2.9" fill="#ffffff" stroke="#aa0000" stroke-width="1.9"/><circle cx="744.0" cy="441.0" r="2.9" fill="#ffffff" stroke="#aa0000" stroke-width="1.9"/><circle cx="764.0" cy="434.0" r="2.9" fill="#ffffff" stroke="#aa0000" stroke-width="1.9"/><circle cx="784.0" cy="419.0" r="2.9" fill="#ffffff" stroke="#aa0000" stroke-width="1.9"/><circle cx="804.0" cy="412.0" r="2.9" fill="#ffffff" stroke="#aa0000" stroke-width="1.9"/><circle cx="824.0" cy="397.0" r="2.9" fill="#ffffff" stroke="#aa0000" stroke-width="1.9"/><circle cx="845.0" cy="397.0" r="2.9" fill="#ffffff" stroke="#aa0000" stroke-width="1.9"/><circle cx="865.0" cy="397.0" r="2.9" fill="#ffffff" stroke="#aa0000" stroke-width="1.9"/><circle cx="885.0" cy="405.0" r="2.9" fill="#ffffff" stroke="#aa0000" stroke-width="1.9"/><circle cx="905.0" cy="412.0" r="2.9" fill="#ffffff" stroke="#aa0000" stroke-width="1.9"/><circle cx="926.0" cy="419.0" r="2.9" fill="#ffffff" stroke="#aa0000" stroke-width="1.9"/><circle cx="946.0" cy="434.0" r="2.9" fill="#ffffff" stroke="#aa0000" stroke-width="1.9"/><circle cx="967.0" cy="434.0" r="2.9" fill="#ffffff" stroke="#aa0000" stroke-width="1.9"/><circle cx="987.0" cy="434.0" r="2.9" fill="#ffffff" stroke="#aa0000" stroke-width="1.9"/><circle cx="1007.0" cy="441.0" r="2.9" fill="#ffffff" stroke="#aa0000" stroke-width="1.9"/><circle cx="1027.0" cy="434.0" r="2.9" fill="#ffffff" stroke="#aa0000" stroke-width="1.9"/><circle cx="1048.0" cy="441.0" r="2.9" fill="#ffffff" stroke="#aa0000" stroke-width="1.9"/><circle cx="1068.0" cy="441.0" r="2.9" fill="#ffffff" stroke="#aa0000" stroke-width="1.9"/><circle cx="1088.0" cy="434.0" r="2.9" fill="#ffffff" stroke="#aa0000" stroke-width="1.9"/><circle cx="1108.0" cy="434.0" r="2.9" fill="#ffffff" stroke="#aa0000" stroke-width="1.9"/><circle cx="1129.0" cy="441.0" r="2.9" fill="#ffffff" stroke="#aa0000" stroke-width="1.9"/><circle cx="1149.0" cy="449.0" r="2.9" fill="#ffffff" stroke="#aa0000" stroke-width="1.9"/><circle cx="1169.0" cy="441.0" r="2.9" fill="#ffffff" stroke="#aa0000" stroke-width="1.9"/><circle cx="1189.0" cy="449.0" r="2.9" fill="#ffffff" stroke="#aa0000" stroke-width="1.9"/><circle cx="1210.0" cy="441.0" r="2.9" fill="#ffffff" stroke="#aa0000" stroke-width="1.9"/><circle cx="1230.0" cy="449.0" r="2.9" fill="#ffffff" stroke="#aa0000" stroke-width="1.9"/><circle cx="1250.0" cy="449.0" r="2.9" fill="#ffffff" stroke="#aa0000" stroke-width="1.9"/><circle cx="1270.0" cy="456.0" r="2.9" fill="#ffffff" stroke="#aa0000" stroke-width="1.9"/><circle cx="1290.0" cy="456.0" r="2.9" fill="#ffffff" stroke="#aa0000" stroke-width="1.9"/><circle cx="1310.0" cy="456.0" r="2.9" fill="#ffffff" stroke="#aa0000" stroke-width="1.9"/><circle cx="1331.0" cy="456.0" r="2.9" fill="#ffffff" stroke="#aa0000" stroke-width="1.9"/><circle cx="1351.0" cy="456.0" r="2.9" fill="#ffffff" stroke="#aa0000" stroke-width="1.9"/><circle cx="1371.0" cy="449.0" r="2.9" fill="#ffffff" stroke="#aa0000" stroke-width="1.9"/><circle cx="1391.0" cy="434.0" r="2.9" fill="#ffffff" stroke="#aa0000" stroke-width="1.9"/><circle cx="1412.0" cy="412.0" r="2.9" fill="#ffffff" stroke="#aa0000" stroke-width="1.9"/><circle cx="1432.0" cy="405.0" r="2.9" fill="#ffffff" stroke="#aa0000" stroke-width="1.9"/><circle cx="1452.0" cy="405.0" r="2.9" fill="#ffffff" stroke="#aa0000" stroke-width="1.9"/><circle cx="1472.0" cy="397.0" r="2.9" fill="#ffffff" stroke="#aa0000" stroke-width="1.9"/><circle cx="1492.0" cy="405.0" r="2.9" fill="#ffffff" stroke="#aa0000" stroke-width="1.9"/><circle cx="1513.0" cy="412.0" r="2.9" fill="#ffffff" stroke="#aa0000" stroke-width="1.9"/><circle cx="1533.0" cy="427.0" r="2.9" fill="#ffffff" stroke="#aa0000" stroke-width="1.9"/><circle cx="1554.0" cy="434.0" r="2.9" fill="#ffffff" stroke="#aa0000" stroke-width="1.9"/><circle cx="1574.0" cy="441.0" r="2.9" fill="#ffffff" stroke="#aa0000" stroke-width="1.9"/><circle cx="1594.0" cy="449.0" r="2.9" fill="#ffffff" stroke="#aa0000" stroke-width="1.9"/><circle cx="1614.0" cy="449.0" r="2.9" fill="#ffffff" stroke="#aa0000" stroke-width="1.9"/><circle cx="1635.0" cy="449.0" r="2.9" fill="#ffffff" stroke="#aa0000" stroke-width="1.9"/><circle cx="1655.0" cy="449.0" r="2.9" fill="#ffffff" stroke="#aa0000" stroke-width="1.9"/><circle cx="1675.0" cy="434.0" r="2.9" fill="#ffffff" stroke="#aa0000" stroke-width="1.9"/><circle cx="1695.0" cy="405.0" r="2.9" fill="#ffffff" stroke="#aa0000" stroke-width="1.9"/><circle cx="1716.0" cy="397.0" r="2.9" fill="#ffffff" stroke="#aa0000" stroke-width="1.9"/><circle cx="1736.0" cy="390.0" r="2.9" fill="#ffffff" stroke="#aa0000" stroke-width="1.9"/><circle cx="1756.0" cy="383.0" r="2.9" fill="#ffffff" stroke="#aa0000" stroke-width="1.9"/><circle cx="1776.0" cy="390.0" r="2.9" fill="#ffffff" stroke="#aa0000" stroke-width="1.9"/><circle cx="1797.0" cy="383.0" r="2.9" fill="#ffffff" stroke="#aa0000" stroke-width="1.9"/><circle cx="1817.0" cy="368.0" r="2.9" fill="#ffffff" stroke="#aa0000" stroke-width="1.9"/>

<line x1="461" y1="186" x2="461" y2="537" stroke="#ff0000" stroke-width="2" shape-rendering="crispEdges"/>
<circle cx="461.0" cy="515.0" r="2.9" fill="#ff0000" stroke="#741ea6" stroke-width="1.9"/>
<circle cx="461.0" cy="236.0" r="2.9" fill="#ff0000" stroke="#386802" stroke-width="1.9"/>
<circle cx="461.0" cy="449.0" r="2.9" fill="#ff0000" stroke="#aa0000" stroke-width="1.9"/>
<rect x="436" y="326" width="60" height="20" fill="#fff" stroke="#741ea6" stroke-width="2" shape-rendering="crispEdges"/>
<text x="466" y="340.7" text-anchor="middle" fill="#741ea6" font-size="11" letter-spacing="-0.1">1.6 °P</text>
<rect x="436" y="351" width="60" height="20" fill="#fff" stroke="#386802" stroke-width="2" shape-rendering="crispEdges"/>
<text x="466" y="365.7" text-anchor="middle" fill="#386802" font-size="11" letter-spacing="-0.1">9.0 %</text>
<rect x="436" y="376" width="60" height="20" fill="#fff" stroke="#aa0000" stroke-width="2" shape-rendering="crispEdges"/>
<text x="466" y="390.7" text-anchor="middle" fill="#aa0000" font-size="11" letter-spacing="-0.1">16.8 °C</text>
</svg>
<div class="tbl"><div class="thead"><div class="th c0">Datum</div><div class="th" style="letter-spacing:-0.6px">SRE [°P]</div><div class="th" style="letter-spacing:-0.2px">Temp. [°C]</div><div class="th" style="letter-spacing:-0.35px">Alk. [%]</div><div class="th" style="letter-spacing:-0.35px">tEVG [%]</div></div>
<div class="tr"><div class="td c0">04.08.2019 00:23</div><div class="td">11,7</div><div class="td">18,3</div><div class="td">3,4</div><div class="td">27,5</div></div>
<div class="tr alt"><div class="td c0">04.08.2019 13:20</div><div class="td">8,5</div><div class="td">17,8</div><div class="td">5,3</div><div class="td">42,8</div></div>
<div class="tr"><div class="td c0">04.08.2019 14:56</div><div class="td">8,1</div><div class="td">17,8</div><div class="td">5,5</div><div class="td">44,4</div></div>
<div class="tr alt"><div class="td c0">04.08.2019 16:33</div><div class="td">7,7</div><div class="td">17,6</div><div class="td">5,7</div><div class="td">46,0</div></div>
<div class="tr"><div class="td c0">04.08.2019 18:11</div><div class="td">7,0</div><div class="td">17,5</div><div class="td">6,1</div><div class="td">49,7</div></div>
<div class="tr alt"><div class="td c0">04.08.2019 19:48</div><div class="td">5,9</div><div class="td">17,1</div><div class="td">6,7</div><div class="td">54,5</div></div>
<div class="tr"><div class="td c0">04.08.2019 21:25</div><div class="td">4,8</div><div class="td">17,1</div><div class="td">7,3</div><div class="td">59,8</div></div>
<div class="tr alt"><div class="td c0">04.08.2019 23:02</div><div class="td">3,9</div><div class="td">16,9</div><div class="td">7,8</div><div class="td">63,8</div></div>
<div class="tr"><div class="td c0">05.08.2019 00:40</div><div class="td">3,2</div><div class="td">16,8</div><div class="td">8,2</div><div class="td">67,1</div></div>
<div class="tr alt"><div class="td c0">05.08.2019 02:17</div><div class="td">2,6</div><div class="td">16,7</div><div class="td">8,5</div><div class="td">69,7</div></div>
<div class="tr"><div class="td c0">05.08.2019 03:54</div><div class="td">2,0</div><div class="td">16,8</div><div class="td">8,8</div><div class="td">72,7</div></div>
<div class="tr alt"><div class="td c0">05.08.2019 05:32</div><div class="td">1,6</div><div class="td">16,8</div><div class="td">9,0</div><div class="td">74,3</div></div>
<div class="tr"><div class="td c0">05.08.2019 07:09</div><div class="td">1,4</div><div class="td">16,8</div><div class="td">9,1</div><div class="td">75,2</div></div>
<div class="tr alt sel"><div class="td c0">05.08.2019 08:47</div><div class="td">1,6</div><div class="td">16,8</div><div class="td cur">9,0</div><div class="td">74,3</div></div>
<div class="tr"><div class="td c0">05.08.2019 10:24</div><div class="td">1,8</div><div class="td">16,7</div><div class="td">8,9</div><div class="td">73,5</div></div>
<div class="tr alt"><div class="td c0">05.08.2019 12:01</div><div class="td">1,9</div><div class="td">16,9</div><div class="td">8,9</div><div class="td">73,3</div></div>
<div class="sb"><div class="sbup"><i></i></div><div class="sbh"></div><div class="sbdn"><i></i></div></div></div>
<div class="lbl" style="left:30px;top:1067px">Datum</div>
<div class="edit" style="left:68px;top:1062px;width:118px;height:23px;line-height:22px"><span class="v" style="left:4px;letter-spacing:0.15px">11.08.2019 02:24</span><span class="dd" style="left:97px;width:19px"></span><span class="dv" style="left:96px"></span><svg class="abs" style="left:102px;top:9px" width="8" height="5"><path d="M0 0.3 H7.6 L3.8 4.2 Z" fill="#5c5c5c"/></svg></div>
<div class="lbl" style="left:191.5px;top:1067px;letter-spacing:0.18px">Restextrakt</div>
<div class="edit" style="left:255px;width:60px;top:1063px;height:21px;line-height:20px"><span class="v" style="left:10.3px;letter-spacing:0.2px">17,7</span><span class="dd" style="left:45px;width:13px"></span><span class="dv" style="left:44px"></span><svg class="abs" style="left:48px;top:3.6px" width="8" height="13"><path d="M0 4 L3.9 0.2 L7.8 4 Z M0 7.3 L3.9 11.2 L7.8 7.3 Z" fill="#5c5c5c"/></svg></div>
<div class="lbl" style="left:321px;top:1067px">°P</div>
<div class="lbl" style="left:357px;top:1067px;letter-spacing:0.08px">Temperatur</div>
<div class="edit" style="left:419px;width:60px;top:1063px;height:21px;line-height:20px"><span class="v" style="left:10.3px;letter-spacing:0.2px">20,0</span><span class="dd" style="left:45px;width:13px"></span><span class="dv" style="left:44px"></span><svg class="abs" style="left:48px;top:3.6px" width="8" height="13"><path d="M0 4 L3.9 0.2 L7.8 4 Z M0 7.3 L3.9 11.2 L7.8 7.3 Z" fill="#5c5c5c"/></svg></div>
<div class="lbl" style="left:485px;top:1067px">°C</div>
<div class="btn" style="left:521px;width:80px;letter-spacing:1px">...</div>
<div class="btn" style="left:607px;width:106px">Messung hinzufügen</div>
<div class="btn" style="left:719px;width:80px">Import iSpindel</div>
<div class="btn" style="left:1800px;width:89px;letter-spacing:-0.32px">Messung löschen</div>
<div id="dots"><i style="left:953px"></i><i style="left:956px"></i><i style="left:959px"></i><i style="left:962px"></i><i style="left:965px"></i><i style="left:968px"></i></div>
<div id="bottom"><i style="left:48px;width:344px"></i><i style="left:639px;width:48px;background:#3c3c3c"></i></div>
</body></html>
